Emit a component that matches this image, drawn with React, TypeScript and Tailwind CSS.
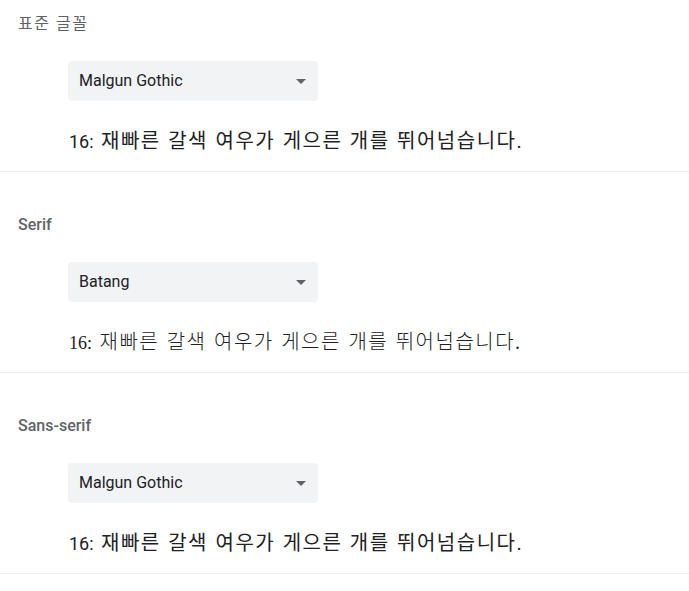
const SAMPLE = "재빠른 갈색 여우가 게으른 개를 뛰어넘습니다.";

type Row = {
  label: string;
  value: string;
  first?: boolean;
  serif?: boolean;
};

const rows: Row[] = [
  { label: "표준 글꼴", value: "Malgun Gothic", first: true },
  { label: "Serif", value: "Batang", serif: true },
  { label: "Sans-serif", value: "Malgun Gothic" },
];

function FontSelect({ value }: { value: string }) {
  return (
    <div className="ml-[68px] flex h-10 w-[250px] items-center justify-between rounded bg-[#f1f3f4] pl-[11px] pr-[11px]">
      <span className="text-[16px] text-[#202124]">{value}</span>
      <svg width="10" height="5" viewBox="0 0 10 5" className="mr-px">
        <path d="M0 0h10L5 5z" fill="#5f6368" />
      </svg>
    </div>
  );
}

export default function App() {
  return (
    <div
      className="min-h-screen bg-white"
      style={{ fontFamily: "Roboto, 'Noto Sans CJK KR', sans-serif" }}
    >
      {rows.map((row) => (
        <section
          key={row.label}
          className={`border-b border-[#ececec] pb-[18px] ${row.first ? "pt-[14px]" : "pt-[43px]"}`}
        >
          <div
            className={`ml-[18px] h-5 text-[16px] leading-5 text-[#5f6368] ${row.first ? "font-normal tracking-[1.5px]" : "font-medium"}`}
          >
            {row.label}
          </div>
          <div className="mt-[27px]">
            <FontSelect value={row.value} />
          </div>
          <p
            className={`ml-[69px] mt-7 h-6 whitespace-nowrap text-[20px] leading-6 tracking-[1.5px] [word-spacing:1px] text-[#202124] ${row.serif ? "font-light" : ""}`}
            style={
              row.serif
                ? { fontFamily: "'Liberation Serif', 'Noto Sans CJK KR', serif" }
                : { fontFamily: "Roboto, 'Noto Sans CJK KR', sans-serif" }
            }
          >
            <span className="text-[18px] tracking-normal">16:</span> {SAMPLE}
          </p>
        </section>
      ))}
    </div>
  );
}
